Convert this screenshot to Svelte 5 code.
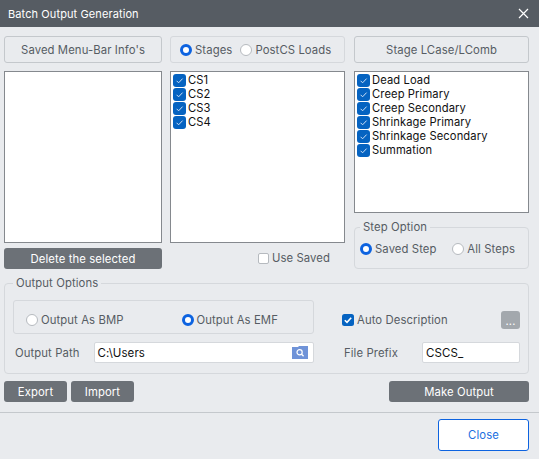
<script>
	const stages = ['CS1', 'CS2', 'CS3', 'CS4'];
	const cases = ['Dead Load', 'Creep Primary', 'Creep Secondary', 'Shrinkage Primary', 'Shrinkage Secondary', 'Summation'];
</script>

{#snippet checkRow(label)}
	<li>
		<svg class="tick" viewBox="0 0 13 13" width="13" height="13" aria-hidden="true">
			<rect width="13" height="13" rx="3" fill="#0563c1" />
			<path d="M3.6 6.8 L5.6 8.8 L9.6 4.6" fill="none" stroke="#cfe0f5" stroke-width="1" />
		</svg>
		<span>{label}</span>
	</li>
{/snippet}

{#snippet radio(label, on)}
	<span class="radio-item">
		<span class="radio" class:on></span>
		<span>{label}</span>
	</span>
{/snippet}

<div class="dialog">
	<header class="titlebar">
		<span>Batch Output Generation</span>
		<svg viewBox="0 0 11 11" width="11" height="11" aria-hidden="true">
			<path d="M1 1 L10 10 M10 1 L1 10" stroke="#fff" stroke-width="1.2" />
		</svg>
	</header>

	<main class="content">
		<div class="columns">
			<div class="col">
				<button class="btn-light">Saved Menu-Bar Info's</button>
				<div class="list tall"></div>
				<button class="btn-dark full">Delete the selected</button>
			</div>

			<div class="col">
				<div class="radio-box">
					{@render radio('Stages', true)}
					{@render radio('PostCS Loads', false)}
				</div>
				<ul class="list tall">
					{#each stages as s}
						{@render checkRow(s)}
					{/each}
				</ul>
				<div class="use-saved">
					<span class="box"></span>
					<span>Use Saved</span>
				</div>
			</div>

			<div class="col">
				<button class="btn-light">Stage LCase/LComb</button>
				<ul class="list short">
					{#each cases as c}
						{@render checkRow(c)}
					{/each}
				</ul>
				<fieldset class="step">
					<legend>Step Option</legend>
					<div class="step-row">
						{@render radio('Saved Step', true)}
						{@render radio('All Steps', false)}
					</div>
				</fieldset>
			</div>
		</div>

		<fieldset class="output">
			<legend>Output Options</legend>
			<div class="output-grid">
				<div class="format-box">
					{@render radio('Output As BMP', false)}
					{@render radio('Output As EMF', true)}
				</div>
				<div class="auto-row">
					<span class="auto">
						<svg viewBox="0 0 12 12" width="12" height="12" aria-hidden="true">
							<rect width="12" height="12" rx="2.5" fill="#0563c1" />
							<path d="M2.8 6.2 L5 8.4 L9.2 3.8" fill="none" stroke="#fff" stroke-width="1.6" />
						</svg>
						<span>Auto Description</span>
					</span>
					<span class="more">...</span>
				</div>
				<div class="path-row">
					<span class="field-label">Output Path</span>
					<div class="input path">
						<span>C:\Users</span>
						<svg class="browse" viewBox="0 0 16 13" width="16" height="13" aria-hidden="true">
							<path d="M0 1 H6 L7 0 H16 V13 H0 Z" fill="#6f93d8" />
							<circle cx="7.6" cy="6.2" r="2.6" fill="none" stroke="#fff" stroke-width="1.2" />
							<path d="M9.6 8.2 L11.6 10.2" stroke="#fff" stroke-width="1.3" />
						</svg>
					</div>
				</div>
				<div class="prefix-row">
					<span class="field-label">File Prefix</span>
					<div class="input prefix">CSCS_</div>
				</div>
			</div>
		</fieldset>

		<div class="actions">
			<button class="btn-dark small">Export</button>
			<button class="btn-dark small">Import</button>
			<button class="btn-dark make">Make Output</button>
		</div>
	</main>

	<footer class="footer">
		<button class="close">Close</button>
	</footer>
</div>

<style>
	:global(body) {
		background: #e9ebee;
	}

	.dialog {
		width: 539px;
		height: 459px;
		display: flex;
		flex-direction: column;
		background: #e9ebee;
		font-family: Inter, 'Liberation Sans', sans-serif;
		font-size: 11.3px;
		letter-spacing: 0.1px;
		color: #565c63;
		overflow: hidden;
	}

	button {
		font: inherit;
		letter-spacing: 0.1px;
		cursor: pointer;
	}

	.titlebar {
		height: 27px;
		flex: none;
		display: flex;
		align-items: center;
		justify-content: space-between;
		padding: 0 10px 0 8px;
		background: #565c63;
		color: #fff;
		font-size: 11px;
		letter-spacing: 0.1px;
	}

	.content {
		flex: 1;
		padding: 9px 10px 0 4px;
	}

	.columns {
		display: grid;
		grid-template-columns: 158px 175px 176px;
		column-gap: 8px;
	}

	.columns > :nth-child(3) {
		margin-left: 1px;
	}

	.col {
		display: flex;
		flex-direction: column;
	}

	.btn-light {
		height: 27px;
		background: #e9ebee;
		border: 1px solid #c4c8cc;
		border-radius: 3px;
		color: #565c63;
	}

	.radio-box {
		height: 27px;
		box-sizing: border-box;
		display: flex;
		align-items: center;
		gap: 8px;
		padding-left: 9px;
		border: 1px solid #d5d8dc;
		border-radius: 3px;
	}

	.radio-item {
		display: inline-flex;
		align-items: center;
		gap: 3px;
	}

	.radio {
		width: 10px;
		height: 10px;
		flex: none;
		border: 1px solid #b6babf;
		border-radius: 50%;
		background: #fff;
	}

	.radio.on {
		border: 3px solid #0d63e0;
		width: 6px;
		height: 6px;
	}

	.list {
		list-style: none;
		box-sizing: border-box;
		margin: 8px 0 0;
		padding: 1px 2px;
		background: #fff;
		border: 1px solid #85898e;
	}

	.tall {
		height: 172px;
	}

	.short {
		height: 142px;
	}

	.list li {
		display: flex;
		align-items: center;
		height: 14px;
		gap: 2px;
		color: #111;
		font-size: 11.2px;
	}

	.tick {
		flex: none;
	}

	.btn-dark {
		height: 21px;
		padding: 0;
		border: none;
		border-radius: 3px;
		background: #6c7177;
		color: #fff;
	}

	.full {
		margin-top: 5px;
	}

	.use-saved {
		display: flex;
		align-items: center;
		justify-content: flex-end;
		gap: 3px;
		margin-top: 8px;
		padding-right: 15px;
		height: 14px;
	}

	.box {
		width: 9px;
		height: 9px;
		background: #fff;
		border: 1px solid #b6babf;
		border-radius: 2px;
	}

	fieldset {
		margin: 0;
		border: 1px solid #d5d8dc;
		border-radius: 4px;
		min-width: 0;
	}

	legend {
		padding: 0 3px;
		margin-left: 0;
		line-height: 14px;
	}

	.step {
		margin-top: 7px;
		height: 49px;
		box-sizing: border-box;
		padding: 0 0 0 5px;
	}

	.step-row {
		display: flex;
		justify-content: space-between;
		padding: 8px 13px 0 0;
	}

	.output {
		margin-top: 7px;
		height: 98px;
		box-sizing: border-box;
		padding: 0 8px 0 8px;
	}

	.output-grid {
		display: grid;
		grid-template-columns: 301px 1fr;
		column-gap: 27px;
		row-gap: 8px;
		padding-top: 10px;
	}

	.format-box {
		height: 34px;
		box-sizing: border-box;
		display: flex;
		align-items: center;
		gap: 58px;
		padding: 6px 0 0 12px;
		border: 1px solid #d5d8dc;
		border-radius: 3px;
	}

	.auto-row {
		display: flex;
		align-items: center;
		justify-content: space-between;
		margin-left: 1px;
		padding-top: 6px;
	}

	.auto {
		display: inline-flex;
		align-items: center;
		gap: 3px;
	}

	.more {
		width: 19px;
		height: 18px;
		border-radius: 3px;
		background: #a3a8ad;
		color: #fff;
		text-align: center;
		line-height: 20px;
		font-size: 11px;
	}

	.path-row,
	.prefix-row {
		display: flex;
		align-items: center;
	}

	.path-row {
		padding-left: 2px;
		gap: 14px;
	}

	.prefix-row {
		justify-content: space-between;
		margin-left: 3px;
	}

	.field-label {
		white-space: nowrap;
	}

	.input {
		height: 21px;
		box-sizing: border-box;
		display: flex;
		align-items: center;
		background: #fff;
		border: 1px solid #d5d8dc;
		border-radius: 2px;
		color: #111;
		padding-left: 3px;
		font-size: 11.5px;
	}

	.path {
		flex: 1;
		justify-content: space-between;
		padding-right: 5px;
	}

	.prefix {
		width: 98px;
	}

	.actions {
		display: flex;
		gap: 4px;
		margin-top: 7px;
	}

	.small {
		width: 63px;
	}

	.make {
		width: 140px;
		margin-left: auto;
	}

	.footer {
		margin-top: 10px;
		height: 47px;
		box-sizing: border-box;
		flex: none;
		border-top: 1px solid #c4c8cc;
		display: flex;
		justify-content: flex-end;
		padding: 6px 10px 0 0;
	}

	.close {
		width: 91px;
		height: 32px;
		background: #fff;
		border: 1px solid #0d63e0;
		border-radius: 3px;
		color: #1a6fe0;
	}
</style>
